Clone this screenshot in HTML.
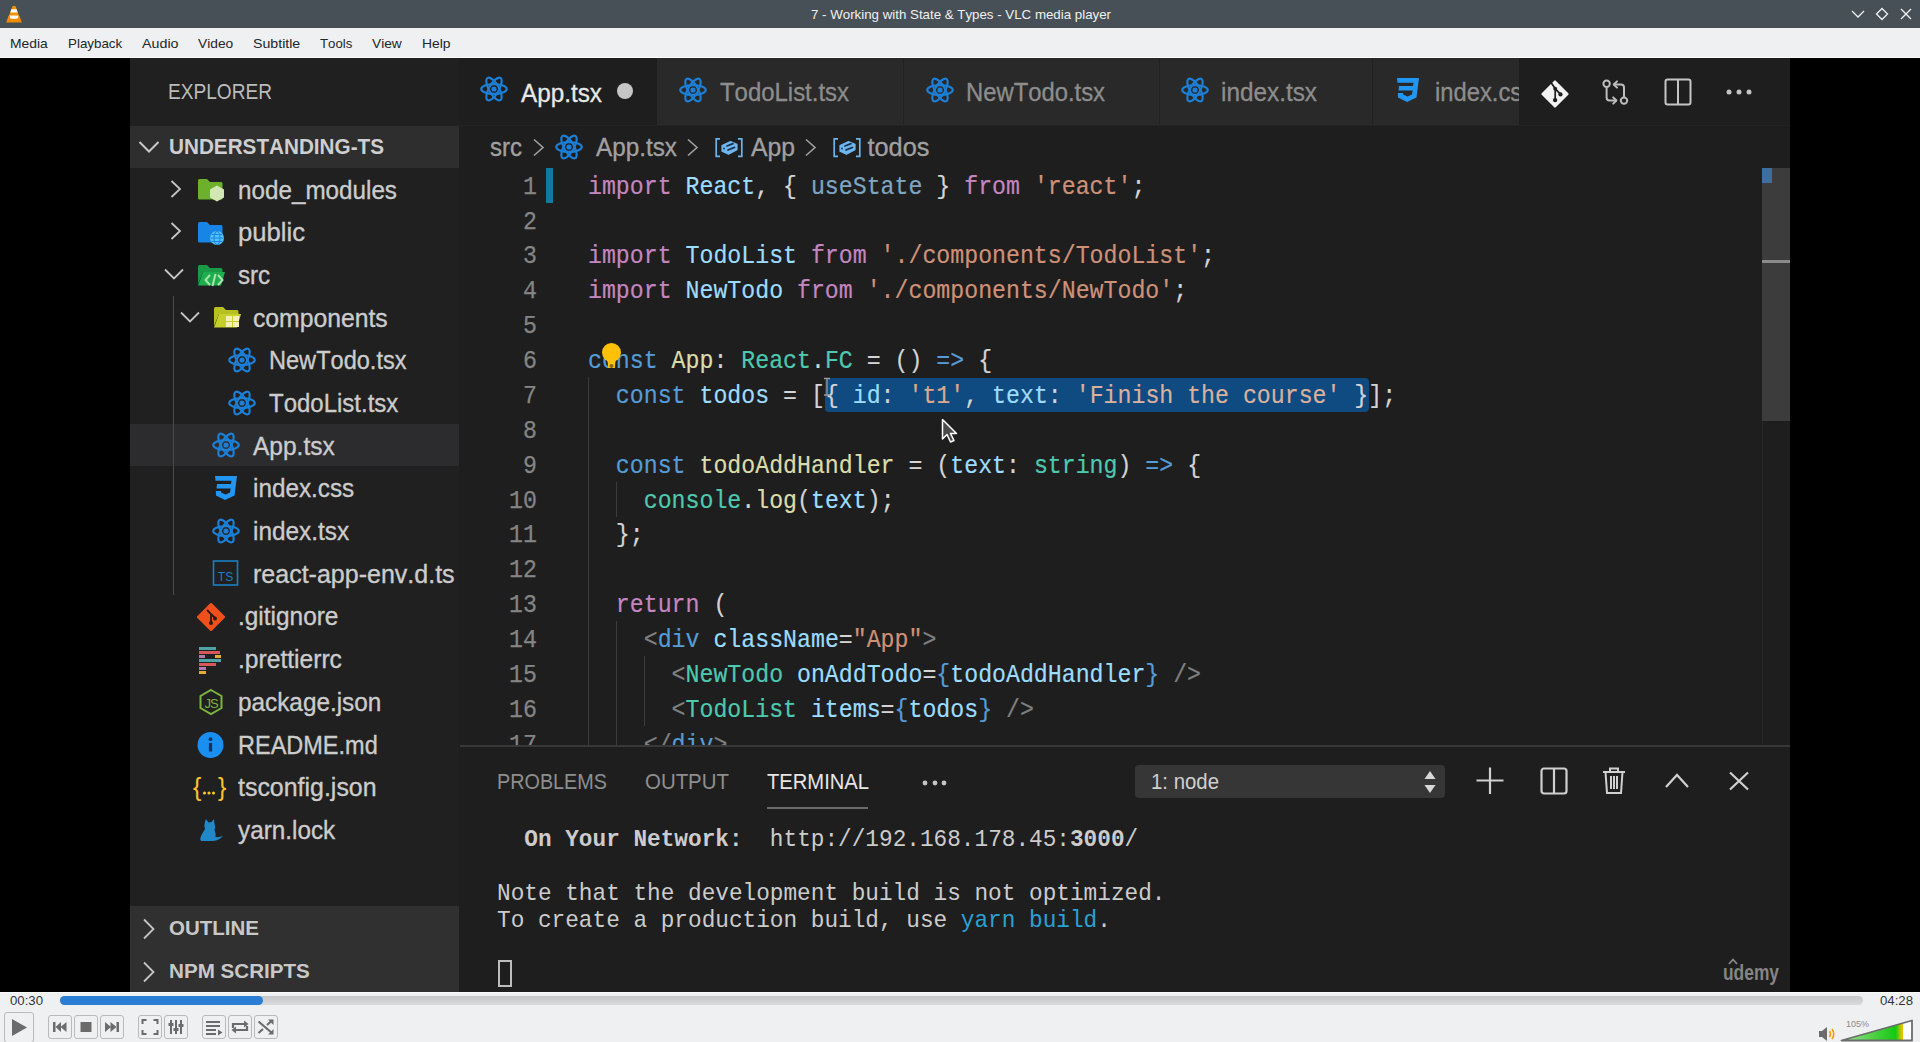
<!DOCTYPE html>
<html><head><meta charset="utf-8"><title>VLC</title>
<style>
*{box-sizing:border-box;margin:0;padding:0}
html,body{width:1920px;height:1042px;overflow:hidden;background:#000;position:relative}
.t{position:absolute;white-space:pre;transform-origin:0 0;font-kerning:none;font-variant-ligatures:none}
.r{position:absolute;display:block}
</style></head><body>
<div class="r" style="left:0px;top:0px;width:1920px;height:28px;background:#475057;"></div>
<svg class="r" style="left:0px;top:0px;" width="28" height="28" viewBox="0 0 28 28"><path d="M12.3 6.6 Q14 4.8 15.7 6.6 L19.6 17.5 H8.4 Z" fill="#f39200"/><path d="M8.6 15.6 H19.4 L21.8 22.6 H6.2 Z" fill="#f08a00"/><path d="M11.3 9.3 H16.7 L17.6 12.4 H10.4 Z" fill="#fbfbfb"/><path d="M9.7 15.6 H18.3 L18.1 18.2 Q14 19.8 9.9 18.2 Z" fill="#fbfbfb"/></svg>
<div class="t" style="left:810.50px;top:7.87px;font-size:13.5px;line-height:13.5px;color:#eff0f1;font-family:'Liberation Sans',sans-serif;font-weight:400;transform:scaleX(0.9849);">7 - Working with State &amp; Types - VLC media player</div>
<svg class="r" style="left:1850px;top:7px;" width="16" height="14" viewBox="0 0 16 14"><path d="M2 4 L8 10 L14 4" stroke="#eff0f1" stroke-width="1.3" fill="none"/></svg>
<svg class="r" style="left:1874px;top:6px;" width="16" height="16" viewBox="0 0 16 16"><path d="M8 2.5 L13.5 8 L8 13.5 L2.5 8 Z" stroke="#eff0f1" stroke-width="1.3" fill="none"/></svg>
<svg class="r" style="left:1898px;top:6px;" width="16" height="16" viewBox="0 0 16 16"><path d="M3 3 L13 13 M13 3 L3 13" stroke="#eff0f1" stroke-width="1.4" fill="none"/></svg>
<div class="r" style="left:0px;top:28px;width:1920px;height:29px;background:#eff0f1;"></div>
<div class="r" style="left:0px;top:57px;width:1920px;height:1px;background:#fcfcfc;"></div>
<div class="t" style="left:10.00px;top:36.94px;font-size:13.3px;line-height:13.3px;color:#232629;font-family:'Liberation Sans',sans-serif;font-weight:400;transform:scaleX(1.0435);">Media</div>
<div class="t" style="left:67.75px;top:36.94px;font-size:13.3px;line-height:13.3px;color:#232629;font-family:'Liberation Sans',sans-serif;font-weight:400;transform:scaleX(1.0053);">Playback</div>
<div class="t" style="left:141.50px;top:36.94px;font-size:13.3px;line-height:13.3px;color:#232629;font-family:'Liberation Sans',sans-serif;font-weight:400;transform:scaleX(1.0730);">Audio</div>
<div class="t" style="left:197.75px;top:36.94px;font-size:13.3px;line-height:13.3px;color:#232629;font-family:'Liberation Sans',sans-serif;font-weight:400;transform:scaleX(1.0363);">Video</div>
<div class="t" style="left:252.50px;top:36.94px;font-size:13.3px;line-height:13.3px;color:#232629;font-family:'Liberation Sans',sans-serif;font-weight:400;transform:scaleX(1.0651);">Subtitle</div>
<div class="t" style="left:319.50px;top:36.94px;font-size:13.3px;line-height:13.3px;color:#232629;font-family:'Liberation Sans',sans-serif;font-weight:400;transform:scaleX(0.9916);">Tools</div>
<div class="t" style="left:372.00px;top:36.94px;font-size:13.3px;line-height:13.3px;color:#232629;font-family:'Liberation Sans',sans-serif;font-weight:400;transform:scaleX(1.0320);">View</div>
<div class="t" style="left:422.00px;top:36.94px;font-size:13.3px;line-height:13.3px;color:#232629;font-family:'Liberation Sans',sans-serif;font-weight:400;transform:scaleX(1.0419);">Help</div>
<div class="r" style="left:0px;top:58px;width:1920px;height:934px;background:#000;"></div>
<div class="r" style="left:130px;top:58px;width:329px;height:934px;background:#202020;"></div>
<div class="t" style="left:168.00px;top:81.67px;font-size:21.3px;line-height:21.3px;color:#bbbbbb;font-family:'Liberation Sans',sans-serif;font-weight:400;transform:scaleX(0.8965);">EXPLORER</div>
<div class="r" style="left:130px;top:126px;width:329px;height:42px;background:#2e2e2e;"></div>
<svg class="r" style="left:137px;top:139px;" width="24" height="16" viewBox="0 0 24 16"><path d="M2.5 3 L12 12.5 L21.5 3" stroke="#c8c8c8" stroke-width="2" fill="none"/></svg>
<div class="t" style="left:168.50px;top:136.80px;font-size:21.5px;line-height:21.5px;color:#cfcfcf;font-family:'Liberation Sans',sans-serif;font-weight:700;transform:scaleX(0.9626);">UNDERSTANDING-TS</div>
<div class="r" style="left:130px;top:424px;width:329px;height:42px;background:#2c2c2e;"></div>
<div class="r" style="left:173px;top:296px;width:1px;height:299px;background:#4a4a4a;"></div>
<svg class="r" style="left:169px;top:179px;" width="14" height="20" viewBox="0 0 14 20"><path d="M2.5 2 L11 10 L2.5 18" stroke="#c5c5c5" stroke-width="1.8" fill="none"/></svg>
<svg class="r" style="left:197px;top:176px;" width="30" height="28" viewBox="0 0 30 28"><path d="M1 4.5 Q1 3 2.5 3 H10 L13 6 H24 Q25.5 6 25.5 7.5 V22 Q25.5 23.5 24 23.5 H2.5 Q1 23.5 1 22 Z" fill="#6cb02c"/><path d="M20 9.5 L27 13.5 V21.5 L20 25.5 L13 21.5 V13.5 Z" fill="#d3e7b4"/></svg>
<div class="t" style="left:237.50px;top:176.79px;font-size:26px;line-height:26px;color:#cccccc;font-family:'Liberation Sans',sans-serif;font-weight:400;transform:scaleX(0.9321);-webkit-text-stroke:0.35px #cccccc">node_modules</div>
<svg class="r" style="left:169px;top:221px;" width="14" height="20" viewBox="0 0 14 20"><path d="M2.5 2 L11 10 L2.5 18" stroke="#c5c5c5" stroke-width="1.8" fill="none"/></svg>
<svg class="r" style="left:197px;top:219px;" width="30" height="28" viewBox="0 0 30 28"><path d="M1 4.5 Q1 3 2.5 3 H10 L13 6 H24 Q25.5 6 25.5 7.5 V22 Q25.5 23.5 24 23.5 H2.5 Q1 23.5 1 22 Z" fill="#1884e6"/><circle cx="20" cy="19" r="7" fill="#56c2f4"/><g stroke="#1884e6" stroke-width="1.1" fill="none"><ellipse cx="20" cy="19" rx="3" ry="6.5"/><path d="M13.5 19 H26.5 M14.5 15.5 H25.5 M14.5 22.5 H25.5"/></g></svg>
<div class="t" style="left:237.50px;top:219.46px;font-size:26px;line-height:26px;color:#cccccc;font-family:'Liberation Sans',sans-serif;font-weight:400;transform:scaleX(0.9863);-webkit-text-stroke:0.35px #cccccc">public</div>
<svg class="r" style="left:163px;top:267px;" width="22" height="14" viewBox="0 0 22 14"><path d="M2 2.5 L11 11.5 L20 2.5" stroke="#c5c5c5" stroke-width="1.8" fill="none"/></svg>
<svg class="r" style="left:197px;top:262px;" width="30" height="28" viewBox="0 0 30 28"><path d="M1 4.5 Q1 3 2.5 3 H10 L13 6 H24 Q25.5 6 25.5 7.5 V10 H6 L1 22 Z" fill="#1a9a46"/><path d="M6 10 H28 L24 23.5 H1 Z" fill="#1fae4f"/><g stroke="#a8e6a8" stroke-width="2" fill="none"><path d="M13 13 L8.5 18 L13 23 M21 13 L25.5 18 L21 23 M18.5 12 L15.5 24"/></g></svg>
<div class="t" style="left:237.50px;top:262.13px;font-size:26px;line-height:26px;color:#cccccc;font-family:'Liberation Sans',sans-serif;font-weight:400;transform:scaleX(0.9291);-webkit-text-stroke:0.35px #cccccc">src</div>
<svg class="r" style="left:178.5px;top:310px;" width="22" height="14" viewBox="0 0 22 14"><path d="M2 2.5 L11 11.5 L20 2.5" stroke="#c5c5c5" stroke-width="1.8" fill="none"/></svg>
<svg class="r" style="left:212.5px;top:304px;" width="30" height="28" viewBox="0 0 30 28"><path d="M1 4.5 Q1 3 2.5 3 H10 L13 6 H24 Q25.5 6 25.5 7.5 V10 H6 L1 22 Z" fill="#b8c020"/><path d="M6 10 H28 L24 23.5 H1 Z" fill="#c6d02a"/><g fill="#f4f0b8"><rect x="13" y="12" width="6" height="5"/><rect x="20" y="12" width="6" height="5"/><rect x="13" y="18" width="6" height="5"/><rect x="20" y="18" width="6" height="5"/></g></svg>
<div class="t" style="left:253.00px;top:304.80px;font-size:26px;line-height:26px;color:#cccccc;font-family:'Liberation Sans',sans-serif;font-weight:400;transform:scaleX(0.9510);-webkit-text-stroke:0.35px #cccccc">components</div>
<svg class="r" style="left:227.5px;top:346px;" width="28" height="28" viewBox="0 0 28 28"><g fill="none" stroke="#1d80d8" stroke-width="2.1" transform="translate(14 14)"><ellipse rx="12.8" ry="4.9"/><ellipse rx="12.8" ry="4.9" transform="rotate(60)"/><ellipse rx="12.8" ry="4.9" transform="rotate(120)"/></g><circle cx="14" cy="14" r="2.6" fill="#1d80d8"/></svg>
<div class="t" style="left:268.50px;top:347.47px;font-size:26px;line-height:26px;color:#cccccc;font-family:'Liberation Sans',sans-serif;font-weight:400;transform:scaleX(0.9063);-webkit-text-stroke:0.35px #cccccc">NewTodo.tsx</div>
<svg class="r" style="left:227.5px;top:389px;" width="28" height="28" viewBox="0 0 28 28"><g fill="none" stroke="#1d80d8" stroke-width="2.1" transform="translate(14 14)"><ellipse rx="12.8" ry="4.9"/><ellipse rx="12.8" ry="4.9" transform="rotate(60)"/><ellipse rx="12.8" ry="4.9" transform="rotate(120)"/></g><circle cx="14" cy="14" r="2.6" fill="#1d80d8"/></svg>
<div class="t" style="left:268.50px;top:390.14px;font-size:26px;line-height:26px;color:#cccccc;font-family:'Liberation Sans',sans-serif;font-weight:400;transform:scaleX(0.9225);-webkit-text-stroke:0.35px #cccccc">TodoList.tsx</div>
<svg class="r" style="left:212px;top:431px;" width="28" height="28" viewBox="0 0 28 28"><g fill="none" stroke="#1d80d8" stroke-width="2.1" transform="translate(14 14)"><ellipse rx="12.8" ry="4.9"/><ellipse rx="12.8" ry="4.9" transform="rotate(60)"/><ellipse rx="12.8" ry="4.9" transform="rotate(120)"/></g><circle cx="14" cy="14" r="2.6" fill="#1d80d8"/></svg>
<div class="t" style="left:253.00px;top:432.81px;font-size:26px;line-height:26px;color:#cccccc;font-family:'Liberation Sans',sans-serif;font-weight:400;transform:scaleX(0.9422);-webkit-text-stroke:0.35px #cccccc">App.tsx</div>
<svg class="r" style="left:212px;top:474px;" width="28" height="28" viewBox="0 0 28 28"><path d="M3 2 H25 L22.5 21.5 L13 26 L4 21.5 L3.8 17 H9 L9.2 18.5 L13.5 20.5 L18 18.5 L18.6 14.5 H4.5 L5 10 H19 L19.5 6.8 H3.5 Z" fill="#2196f3"/></svg>
<div class="t" style="left:253.00px;top:475.48px;font-size:26px;line-height:26px;color:#cccccc;font-family:'Liberation Sans',sans-serif;font-weight:400;transform:scaleX(0.9338);-webkit-text-stroke:0.35px #cccccc">index.css</div>
<svg class="r" style="left:212px;top:517px;" width="28" height="28" viewBox="0 0 28 28"><g fill="none" stroke="#1d80d8" stroke-width="2.1" transform="translate(14 14)"><ellipse rx="12.8" ry="4.9"/><ellipse rx="12.8" ry="4.9" transform="rotate(60)"/><ellipse rx="12.8" ry="4.9" transform="rotate(120)"/></g><circle cx="14" cy="14" r="2.6" fill="#1d80d8"/></svg>
<div class="t" style="left:253.00px;top:518.15px;font-size:26px;line-height:26px;color:#cccccc;font-family:'Liberation Sans',sans-serif;font-weight:400;transform:scaleX(0.9366);-webkit-text-stroke:0.35px #cccccc">index.tsx</div>
<svg class="r" style="left:212px;top:559px;" width="28" height="28" viewBox="0 0 28 28"><rect x="1.5" y="2" width="24" height="24" fill="none" stroke="#1c7fc4" stroke-width="1.6"/><text x="13.5" y="22" text-anchor="middle" font-family="Liberation Sans" font-size="12" fill="#1c7fc4">TS</text></svg>
<div class="t" style="left:252.60px;top:560.82px;font-size:26px;line-height:26px;color:#cccccc;font-family:'Liberation Sans',sans-serif;font-weight:400;transform:scaleX(0.9621);-webkit-text-stroke:0.35px #cccccc">react-app-env.d.ts</div>
<svg class="r" style="left:197px;top:603px;" width="30" height="28" viewBox="0 0 30 28"><path d="M14 1.5 L26.5 14 L14 26.5 L1.5 14 Z" fill="#f0501c" stroke="#f0501c" stroke-width="3" stroke-linejoin="round"/><g stroke="#2a1a14" stroke-width="1.8" fill="none"><path d="M10 7 L14 11 V20 M14 11 L18 15"/></g><circle cx="14" cy="20" r="2" fill="#2a1a14"/><circle cx="18" cy="15.5" r="2" fill="#2a1a14"/></svg>
<div class="t" style="left:238.00px;top:603.49px;font-size:26px;line-height:26px;color:#cccccc;font-family:'Liberation Sans',sans-serif;font-weight:400;transform:scaleX(0.9387);-webkit-text-stroke:0.35px #cccccc">.gitignore</div>
<svg class="r" style="left:197px;top:646px;" width="28" height="30" viewBox="0 0 28 30"><rect x="2" y="1" width="17" height="3" fill="#56b3b4" opacity="0.9"/><rect x="2" y="5" width="21" height="3" fill="#ea5e5e" opacity="0.9"/><rect x="2" y="9" width="6" height="3" fill="#bf85bf" opacity="0.9"/><rect x="18" y="9" width="6" height="3" fill="#f7ba3e" opacity="0.9"/><rect x="2" y="13" width="22" height="3" fill="#56b3b4" opacity="0.9"/><rect x="2" y="17" width="17" height="3" fill="#ea5e5e" opacity="0.9"/><rect x="2" y="21" width="7" height="3" fill="#bf85bf" opacity="0.9"/><rect x="2" y="25" width="7" height="3" fill="#f7ba3e" opacity="0.9"/></svg>
<div class="t" style="left:238.00px;top:646.16px;font-size:26px;line-height:26px;color:#cccccc;font-family:'Liberation Sans',sans-serif;font-weight:400;transform:scaleX(0.9463);-webkit-text-stroke:0.35px #cccccc">.prettierrc</div>
<svg class="r" style="left:197px;top:688px;" width="28" height="28" viewBox="0 0 28 28"><path d="M14 2 L24.5 8 V20 L14 26 L3.5 20 V8 Z" fill="none" stroke="#7cb342" stroke-width="2"/><text x="14" y="19.5" text-anchor="middle" font-family="Liberation Sans" font-size="13" fill="#7cb342" letter-spacing="-1">JS</text></svg>
<div class="t" style="left:238.00px;top:688.83px;font-size:26px;line-height:26px;color:#cccccc;font-family:'Liberation Sans',sans-serif;font-weight:400;transform:scaleX(0.9353);-webkit-text-stroke:0.35px #cccccc">package.json</div>
<svg class="r" style="left:197px;top:731px;" width="28" height="28" viewBox="0 0 28 28"><circle cx="13.5" cy="14" r="13" fill="#1a8ff0"/><rect x="11.9" y="12" width="3.2" height="8.5" fill="#15335a"/><circle cx="13.5" cy="8.2" r="1.9" fill="#15335a"/></svg>
<div class="t" style="left:238.00px;top:731.50px;font-size:26px;line-height:26px;color:#cccccc;font-family:'Liberation Sans',sans-serif;font-weight:400;transform:scaleX(0.9038);-webkit-text-stroke:0.35px #cccccc">README.md</div>
<svg class="r" style="left:193px;top:774px;" width="34" height="28" viewBox="0 0 34 28"><text x="0" y="22" font-family="Liberation Sans" font-size="25" fill="#f9c22e">{</text><text x="25" y="22" font-family="Liberation Sans" font-size="25" fill="#f9c22e">}</text><g fill="#f9c22e"><circle cx="11.5" cy="19" r="1.6"/><circle cx="16" cy="19" r="1.6"/><circle cx="20.5" cy="19" r="1.6"/></g></svg>
<div class="t" style="left:238.00px;top:774.17px;font-size:26px;line-height:26px;color:#cccccc;font-family:'Liberation Sans',sans-serif;font-weight:400;transform:scaleX(0.9590);-webkit-text-stroke:0.35px #cccccc">tsconfig.json</div>
<svg class="r" style="left:197px;top:816px;" width="28" height="28" viewBox="0 0 28 28"><path d="M9 3 L11.5 6.5 L14.5 6 L17 3 L17.5 8 Q19 11 17.5 14 Q19 18 18.5 21 Q22 21.5 26 20 Q22 24.5 16 25 H4 Q2.5 23 4 20 Q6 16 8 13 Q6.5 9 9 3 Z" fill="#2188c8"/></svg>
<div class="t" style="left:238.00px;top:816.84px;font-size:26px;line-height:26px;color:#cccccc;font-family:'Liberation Sans',sans-serif;font-weight:400;transform:scaleX(0.9343);-webkit-text-stroke:0.35px #cccccc">yarn.lock</div>
<div class="r" style="left:130px;top:906px;width:329px;height:86px;background:#303030;"></div>
<svg class="r" style="left:141px;top:917px;" width="16" height="24" viewBox="0 0 16 24"><path d="M3 2.5 L12.5 12 L3 21.5" stroke="#c5c5c5" stroke-width="1.8" fill="none"/></svg>
<div class="t" style="left:168.50px;top:919.24px;font-size:19.8px;line-height:19.8px;color:#c8c8c8;font-family:'Liberation Sans',sans-serif;font-weight:700;transform:scaleX(1.0357);">OUTLINE</div>
<svg class="r" style="left:141px;top:960px;" width="16" height="24" viewBox="0 0 16 24"><path d="M3 2.5 L12.5 12 L3 21.5" stroke="#c5c5c5" stroke-width="1.8" fill="none"/></svg>
<div class="t" style="left:168.50px;top:962.24px;font-size:19.8px;line-height:19.8px;color:#c8c8c8;font-family:'Liberation Sans',sans-serif;font-weight:700;transform:scaleX(1.0420);">NPM SCRIPTS</div>
<div class="r" style="left:459px;top:58px;width:1331px;height:934px;background:#1e1e1e;"></div>
<div class="r" style="left:460px;top:58px;width:1330px;height:68px;background:#1e1e1e;"></div>
<div class="r" style="left:657px;top:58px;width:862px;height:68px;background:#292929;"></div>
<div class="r" style="left:903px;top:58px;width:1px;height:68px;background:#222222;"></div>
<div class="r" style="left:1159px;top:58px;width:1px;height:68px;background:#222222;"></div>
<div class="r" style="left:1372px;top:58px;width:1px;height:68px;background:#222222;"></div>
<div class="r" style="left:460px;top:125px;width:1330px;height:1px;background:#232323;"></div>
<svg class="r" style="left:480px;top:75px;" width="28" height="28" viewBox="0 0 28 28"><g fill="none" stroke="#1d80d8" stroke-width="2.1" transform="translate(14 14)"><ellipse rx="12.8" ry="4.9"/><ellipse rx="12.8" ry="4.9" transform="rotate(60)"/><ellipse rx="12.8" ry="4.9" transform="rotate(120)"/></g><circle cx="14" cy="14" r="2.6" fill="#1d80d8"/></svg>
<div class="t" style="left:521.00px;top:80.53px;font-size:25px;line-height:25px;color:#e8e8e8;font-family:'Liberation Sans',sans-serif;font-weight:400;transform:scaleX(0.9715);-webkit-text-stroke:0.3px #e8e8e8">App.tsx</div>
<svg class="r" style="left:616px;top:82px;" width="18" height="18" viewBox="0 0 18 18"><circle cx="9" cy="9" r="8" fill="#c6c6c6"/></svg>
<svg class="r" style="left:679px;top:76px;" width="28" height="28" viewBox="0 0 28 28"><g fill="none" stroke="#1d80d8" stroke-width="2.1" transform="translate(14 14)"><ellipse rx="12.8" ry="4.9"/><ellipse rx="12.8" ry="4.9" transform="rotate(60)"/><ellipse rx="12.8" ry="4.9" transform="rotate(120)"/></g><circle cx="14" cy="14" r="2.6" fill="#1d80d8"/></svg>
<div class="t" style="left:719.50px;top:80.43px;font-size:25px;line-height:25px;color:#8d8d8d;font-family:'Liberation Sans',sans-serif;font-weight:400;transform:scaleX(0.9571);-webkit-text-stroke:0.3px #8d8d8d">TodoList.tsx</div>
<svg class="r" style="left:925.5px;top:76px;" width="28" height="28" viewBox="0 0 28 28"><g fill="none" stroke="#1d80d8" stroke-width="2.1" transform="translate(14 14)"><ellipse rx="12.8" ry="4.9"/><ellipse rx="12.8" ry="4.9" transform="rotate(60)"/><ellipse rx="12.8" ry="4.9" transform="rotate(120)"/></g><circle cx="14" cy="14" r="2.6" fill="#1d80d8"/></svg>
<div class="t" style="left:966.00px;top:80.43px;font-size:25px;line-height:25px;color:#8d8d8d;font-family:'Liberation Sans',sans-serif;font-weight:400;transform:scaleX(0.9528);-webkit-text-stroke:0.3px #8d8d8d">NewTodo.tsx</div>
<svg class="r" style="left:1181px;top:76px;" width="28" height="28" viewBox="0 0 28 28"><g fill="none" stroke="#1d80d8" stroke-width="2.1" transform="translate(14 14)"><ellipse rx="12.8" ry="4.9"/><ellipse rx="12.8" ry="4.9" transform="rotate(60)"/><ellipse rx="12.8" ry="4.9" transform="rotate(120)"/></g><circle cx="14" cy="14" r="2.6" fill="#1d80d8"/></svg>
<div class="t" style="left:1221.00px;top:80.43px;font-size:25px;line-height:25px;color:#8d8d8d;font-family:'Liberation Sans',sans-serif;font-weight:400;transform:scaleX(0.9731);-webkit-text-stroke:0.3px #8d8d8d">index.tsx</div>
<svg class="r" style="left:1394px;top:76px;" width="28" height="28" viewBox="0 0 28 28"><path d="M3 2 H25 L22.5 21.5 L13 26 L4 21.5 L3.8 17 H9 L9.2 18.5 L13.5 20.5 L18 18.5 L18.6 14.5 H4.5 L5 10 H19 L19.5 6.8 H3.5 Z" fill="#2196f3"/></svg>
<div class="r" style="left:1434px;top:58px;width:85px;height:67px;overflow:hidden">
<div class="t" style="left:0.50px;top:22.43px;font-size:25px;line-height:25px;color:#8d8d8d;font-family:'Liberation Sans',sans-serif;font-weight:400;transform:scaleX(0.9500);-webkit-text-stroke:0.3px #8d8d8d">index.css</div>
</div>
<svg class="r" style="left:1541px;top:80px;" width="28" height="28" viewBox="0 0 28 28"><path d="M14 1.5 L26.5 14 L14 26.5 L1.5 14 Z" fill="#f2f2f2" stroke="#f2f2f2" stroke-width="2.2" stroke-linejoin="round"/><g stroke="#1e1e1e" stroke-width="1.7" fill="none" stroke-linecap="round"><path d="M10 2.5 L14.2 8.6 L19.5 14.4 M14.2 8.6 V20"/></g><circle cx="14.2" cy="8.7" r="1.9" fill="#1e1e1e"/><circle cx="19.5" cy="14.4" r="2.1" fill="#1e1e1e"/><circle cx="14.1" cy="20.1" r="2.2" fill="#1e1e1e"/></svg>
<svg class="r" style="left:1600px;top:78px;" width="30" height="30" viewBox="0 0 30 30"><g stroke="#bdbdbd" stroke-width="2" fill="none" stroke-linecap="round" stroke-linejoin="round"><circle cx="6.6" cy="5.7" r="3.2"/><path d="M6.6 9 V19.5 Q6.6 22.5 9.6 22.5 H16"/><path d="M13.2 19.4 L16.4 22.5 L13.2 25.6"/><circle cx="24" cy="22.6" r="3.2"/><path d="M24 19.3 V9.5 Q24 6.5 21 6.5 H14"/><path d="M17 3.4 L13.8 6.5 L17 9.6"/></g></svg>
<svg class="r" style="left:1664px;top:78px;" width="28" height="28" viewBox="0 0 28 28"><rect x="1.5" y="1.5" width="25" height="25" rx="2" fill="none" stroke="#c5c5c5" stroke-width="2"/><path d="M14 1.5 V26.5" stroke="#c5c5c5" stroke-width="2"/></svg>
<svg class="r" style="left:1726px;top:89px;" width="6" height="6" viewBox="0 0 6 6"><circle cx="3" cy="3" r="2.5" fill="#c5c5c5"/></svg>
<svg class="r" style="left:1736px;top:89px;" width="6" height="6" viewBox="0 0 6 6"><circle cx="3" cy="3" r="2.5" fill="#c5c5c5"/></svg>
<svg class="r" style="left:1746px;top:89px;" width="6" height="6" viewBox="0 0 6 6"><circle cx="3" cy="3" r="2.5" fill="#c5c5c5"/></svg>
<div class="t" style="left:490.00px;top:134.98px;font-size:25.3px;line-height:25.3px;color:#a0a0a0;font-family:'Liberation Sans',sans-serif;font-weight:400;transform:scaleX(0.9488);-webkit-text-stroke:0.3px #a9a9a9">src</div>
<svg class="r" style="left:532px;top:138px;" width="14" height="20" viewBox="0 0 14 20"><path d="M2 1.5 L11 9.5 L2 17.5" stroke="#a0a0a0" stroke-width="1.6" fill="none"/></svg>
<svg class="r" style="left:555px;top:133px;" width="28" height="28" viewBox="0 0 28 28"><g fill="none" stroke="#1d80d8" stroke-width="2.1" transform="translate(14 14)"><ellipse rx="12.8" ry="4.9"/><ellipse rx="12.8" ry="4.9" transform="rotate(60)"/><ellipse rx="12.8" ry="4.9" transform="rotate(120)"/></g><circle cx="14" cy="14" r="2.6" fill="#1d80d8"/></svg>
<div class="t" style="left:596.00px;top:134.98px;font-size:25.3px;line-height:25.3px;color:#a0a0a0;font-family:'Liberation Sans',sans-serif;font-weight:400;transform:scaleX(0.9600);-webkit-text-stroke:0.3px #a9a9a9">App.tsx</div>
<svg class="r" style="left:686px;top:138px;" width="14" height="20" viewBox="0 0 14 20"><path d="M2 1.5 L11 9.5 L2 17.5" stroke="#a0a0a0" stroke-width="1.6" fill="none"/></svg>
<svg class="r" style="left:714px;top:137px;" width="30" height="22" viewBox="0 0 30 22"><g fill="none" stroke="#6cb4ec" stroke-width="1.7"><path d="M6 1.8 H2.2 V19.4 H6"/><path d="M24 1.8 H27.8 V19.4 H24"/></g><path d="M8 8.5 L16.5 4.5 L23 7.2 V12.8 L14.5 17.2 L8 14.2 Z" fill="#6fb6ee" stroke="#6fb6ee" stroke-width="1.2" stroke-linejoin="round"/><g stroke="#17324f" stroke-width="1.8" stroke-linecap="round"><path d="M13 9 L19 6.6"/><path d="M14 13 L20.5 10.4"/></g><circle cx="10" cy="11.5" r="0.9" fill="#17324f"/></svg>
<div class="t" style="left:750.50px;top:135.18px;font-size:25.3px;line-height:25.3px;color:#a0a0a0;font-family:'Liberation Sans',sans-serif;font-weight:400;transform:scaleX(0.9774);-webkit-text-stroke:0.3px #a9a9a9">App</div>
<svg class="r" style="left:804px;top:138px;" width="14" height="20" viewBox="0 0 14 20"><path d="M2 1.5 L11 9.5 L2 17.5" stroke="#a0a0a0" stroke-width="1.6" fill="none"/></svg>
<svg class="r" style="left:832px;top:137px;" width="30" height="22" viewBox="0 0 30 22"><g fill="none" stroke="#6cb4ec" stroke-width="1.7"><path d="M6 1.8 H2.2 V19.4 H6"/><path d="M24 1.8 H27.8 V19.4 H24"/></g><path d="M8 8.5 L16.5 4.5 L23 7.2 V12.8 L14.5 17.2 L8 14.2 Z" fill="#6fb6ee" stroke="#6fb6ee" stroke-width="1.2" stroke-linejoin="round"/><g stroke="#17324f" stroke-width="1.8" stroke-linecap="round"><path d="M13 9 L19 6.6"/><path d="M14 13 L20.5 10.4"/></g><circle cx="10" cy="11.5" r="0.9" fill="#17324f"/></svg>
<div class="t" style="left:867.50px;top:135.18px;font-size:25.3px;line-height:25.3px;color:#a0a0a0;font-family:'Liberation Sans',sans-serif;font-weight:400;-webkit-text-stroke:0.3px #a9a9a9">todos</div>
<div class="r" style="left:588px;top:377px;width:1px;height:368px;background:#3b3b3b;"></div>
<div class="r" style="left:616px;top:482px;width:1px;height:35px;background:#3b3b3b;"></div>
<div class="r" style="left:616px;top:621px;width:1px;height:124px;background:#3b3b3b;"></div>
<div class="r" style="left:644px;top:656px;width:1px;height:70px;background:#3b3b3b;"></div>
<div class="r" style="left:546px;top:168px;width:7px;height:35px;background:#0e7aa0;"></div>
<div class="r" style="left:825px;top:378px;width:544px;height:34px;background:#0f4a80;border-radius:4px"></div>
<div class="r" style="left:460px;top:126px;width:1302px;height:619px;overflow:hidden">
<div class="t" style="left:62.57px;top:47.70px;font-size:26.5px;line-height:26.5px;color:#858585;font-family:'Liberation Mono',monospace;font-weight:400;transform:scaleX(0.8760);-webkit-text-stroke:0.25px #858585">1</div>
<div class="t" style="left:62.57px;top:82.57px;font-size:26.5px;line-height:26.5px;color:#858585;font-family:'Liberation Mono',monospace;font-weight:400;transform:scaleX(0.8760);-webkit-text-stroke:0.25px #858585">2</div>
<div class="t" style="left:62.57px;top:117.44px;font-size:26.5px;line-height:26.5px;color:#858585;font-family:'Liberation Mono',monospace;font-weight:400;transform:scaleX(0.8760);-webkit-text-stroke:0.25px #858585">3</div>
<div class="t" style="left:62.57px;top:152.31px;font-size:26.5px;line-height:26.5px;color:#858585;font-family:'Liberation Mono',monospace;font-weight:400;transform:scaleX(0.8760);-webkit-text-stroke:0.25px #858585">4</div>
<div class="t" style="left:62.57px;top:187.18px;font-size:26.5px;line-height:26.5px;color:#858585;font-family:'Liberation Mono',monospace;font-weight:400;transform:scaleX(0.8760);-webkit-text-stroke:0.25px #858585">5</div>
<div class="t" style="left:62.57px;top:222.05px;font-size:26.5px;line-height:26.5px;color:#858585;font-family:'Liberation Mono',monospace;font-weight:400;transform:scaleX(0.8760);-webkit-text-stroke:0.25px #858585">6</div>
<div class="t" style="left:62.57px;top:256.92px;font-size:26.5px;line-height:26.5px;color:#858585;font-family:'Liberation Mono',monospace;font-weight:400;transform:scaleX(0.8760);-webkit-text-stroke:0.25px #858585">7</div>
<div class="t" style="left:62.57px;top:291.79px;font-size:26.5px;line-height:26.5px;color:#858585;font-family:'Liberation Mono',monospace;font-weight:400;transform:scaleX(0.8760);-webkit-text-stroke:0.25px #858585">8</div>
<div class="t" style="left:62.57px;top:326.66px;font-size:26.5px;line-height:26.5px;color:#858585;font-family:'Liberation Mono',monospace;font-weight:400;transform:scaleX(0.8760);-webkit-text-stroke:0.25px #858585">9</div>
<div class="t" style="left:48.64px;top:361.53px;font-size:26.5px;line-height:26.5px;color:#858585;font-family:'Liberation Mono',monospace;font-weight:400;transform:scaleX(0.8760);-webkit-text-stroke:0.25px #858585">10</div>
<div class="t" style="left:48.64px;top:396.40px;font-size:26.5px;line-height:26.5px;color:#858585;font-family:'Liberation Mono',monospace;font-weight:400;transform:scaleX(0.8760);-webkit-text-stroke:0.25px #858585">11</div>
<div class="t" style="left:48.64px;top:431.27px;font-size:26.5px;line-height:26.5px;color:#858585;font-family:'Liberation Mono',monospace;font-weight:400;transform:scaleX(0.8760);-webkit-text-stroke:0.25px #858585">12</div>
<div class="t" style="left:48.64px;top:466.14px;font-size:26.5px;line-height:26.5px;color:#858585;font-family:'Liberation Mono',monospace;font-weight:400;transform:scaleX(0.8760);-webkit-text-stroke:0.25px #858585">13</div>
<div class="t" style="left:48.64px;top:501.01px;font-size:26.5px;line-height:26.5px;color:#858585;font-family:'Liberation Mono',monospace;font-weight:400;transform:scaleX(0.8760);-webkit-text-stroke:0.25px #858585">14</div>
<div class="t" style="left:48.64px;top:535.88px;font-size:26.5px;line-height:26.5px;color:#858585;font-family:'Liberation Mono',monospace;font-weight:400;transform:scaleX(0.8760);-webkit-text-stroke:0.25px #858585">15</div>
<div class="t" style="left:48.64px;top:570.75px;font-size:26.5px;line-height:26.5px;color:#858585;font-family:'Liberation Mono',monospace;font-weight:400;transform:scaleX(0.8760);-webkit-text-stroke:0.25px #858585">16</div>
<div class="t" style="left:48.64px;top:605.62px;font-size:26.5px;line-height:26.5px;color:#858585;font-family:'Liberation Mono',monospace;font-weight:400;transform:scaleX(0.8760);-webkit-text-stroke:0.25px #858585">17</div>
<div class="t" style="left:128px;top:47.70px;font-size:26.5px;line-height:26.5px;font-family:'Liberation Mono',monospace;transform:scaleX(0.8761);-webkit-text-stroke:0.2px currentColor"><span style="color:#c586c0">import</span><span style="color:#d4d4d4"> </span><span style="color:#9cdcfe">React</span><span style="color:#d4d4d4">, { </span><span style="color:#7ea6c2">useState</span><span style="color:#d4d4d4"> } </span><span style="color:#c586c0">from</span><span style="color:#d4d4d4"> </span><span style="color:#ce9178">&#x27;react&#x27;</span><span style="color:#d4d4d4">;</span></div>
<div class="t" style="left:128px;top:117.44px;font-size:26.5px;line-height:26.5px;font-family:'Liberation Mono',monospace;transform:scaleX(0.8761);-webkit-text-stroke:0.2px currentColor"><span style="color:#c586c0">import</span><span style="color:#d4d4d4"> </span><span style="color:#9cdcfe">TodoList</span><span style="color:#d4d4d4"> </span><span style="color:#c586c0">from</span><span style="color:#d4d4d4"> </span><span style="color:#ce9178">&#x27;./components/TodoList&#x27;</span><span style="color:#d4d4d4">;</span></div>
<div class="t" style="left:128px;top:152.31px;font-size:26.5px;line-height:26.5px;font-family:'Liberation Mono',monospace;transform:scaleX(0.8761);-webkit-text-stroke:0.2px currentColor"><span style="color:#c586c0">import</span><span style="color:#d4d4d4"> </span><span style="color:#9cdcfe">NewTodo</span><span style="color:#d4d4d4"> </span><span style="color:#c586c0">from</span><span style="color:#d4d4d4"> </span><span style="color:#ce9178">&#x27;./components/NewTodo&#x27;</span><span style="color:#d4d4d4">;</span></div>
<div class="t" style="left:128px;top:222.05px;font-size:26.5px;line-height:26.5px;font-family:'Liberation Mono',monospace;transform:scaleX(0.8761);-webkit-text-stroke:0.2px currentColor"><span style="color:#569cd6">const</span><span style="color:#d4d4d4"> </span><span style="color:#dcdcaa">App</span><span style="color:#d4d4d4">: </span><span style="color:#4ec9b0">React</span><span style="color:#d4d4d4">.</span><span style="color:#4ec9b0">FC</span><span style="color:#d4d4d4"> = () </span><span style="color:#569cd6">=&gt;</span><span style="color:#d4d4d4"> {</span></div>
<div class="t" style="left:128px;top:256.92px;font-size:26.5px;line-height:26.5px;font-family:'Liberation Mono',monospace;transform:scaleX(0.8761);-webkit-text-stroke:0.2px currentColor"><span style="color:#d4d4d4">  </span><span style="color:#569cd6">const</span><span style="color:#d4d4d4"> </span><span style="color:#9cdcfe">todos</span><span style="color:#d4d4d4"> = [</span><span style="color:#d4d4d4">{ </span><span style="color:#9cdcfe">id</span><span style="color:#d4d4d4">: </span><span style="color:#d9a890">&#x27;t1&#x27;</span><span style="color:#d4d4d4">, </span><span style="color:#9cdcfe">text</span><span style="color:#d4d4d4">: </span><span style="color:#d9b0a0">&#x27;Finish the course&#x27;</span><span style="color:#d4d4d4"> }</span><span style="color:#d4d4d4">];</span></div>
<div class="t" style="left:128px;top:326.66px;font-size:26.5px;line-height:26.5px;font-family:'Liberation Mono',monospace;transform:scaleX(0.8761);-webkit-text-stroke:0.2px currentColor"><span style="color:#d4d4d4">  </span><span style="color:#569cd6">const</span><span style="color:#d4d4d4"> </span><span style="color:#dcdcaa">todoAddHandler</span><span style="color:#d4d4d4"> = (</span><span style="color:#9cdcfe">text</span><span style="color:#d4d4d4">: </span><span style="color:#4ec9b0">string</span><span style="color:#d4d4d4">) </span><span style="color:#569cd6">=&gt;</span><span style="color:#d4d4d4"> {</span></div>
<div class="t" style="left:128px;top:361.53px;font-size:26.5px;line-height:26.5px;font-family:'Liberation Mono',monospace;transform:scaleX(0.8761);-webkit-text-stroke:0.2px currentColor"><span style="color:#d4d4d4">    </span><span style="color:#4ec9b0">console</span><span style="color:#d4d4d4">.</span><span style="color:#dcdcaa">log</span><span style="color:#d4d4d4">(</span><span style="color:#9cdcfe">text</span><span style="color:#d4d4d4">);</span></div>
<div class="t" style="left:128px;top:396.40px;font-size:26.5px;line-height:26.5px;font-family:'Liberation Mono',monospace;transform:scaleX(0.8761);-webkit-text-stroke:0.2px currentColor"><span style="color:#d4d4d4">  };</span></div>
<div class="t" style="left:128px;top:466.14px;font-size:26.5px;line-height:26.5px;font-family:'Liberation Mono',monospace;transform:scaleX(0.8761);-webkit-text-stroke:0.2px currentColor"><span style="color:#d4d4d4">  </span><span style="color:#c586c0">return</span><span style="color:#d4d4d4"> (</span></div>
<div class="t" style="left:128px;top:501.01px;font-size:26.5px;line-height:26.5px;font-family:'Liberation Mono',monospace;transform:scaleX(0.8761);-webkit-text-stroke:0.2px currentColor"><span style="color:#d4d4d4">    </span><span style="color:#808080">&lt;</span><span style="color:#569cd6">div</span><span style="color:#d4d4d4"> </span><span style="color:#9cdcfe">className</span><span style="color:#d4d4d4">=</span><span style="color:#ce9178">&quot;App&quot;</span><span style="color:#808080">&gt;</span></div>
<div class="t" style="left:128px;top:535.88px;font-size:26.5px;line-height:26.5px;font-family:'Liberation Mono',monospace;transform:scaleX(0.8761);-webkit-text-stroke:0.2px currentColor"><span style="color:#d4d4d4">      </span><span style="color:#808080">&lt;</span><span style="color:#4ec9b0">NewTodo</span><span style="color:#d4d4d4"> </span><span style="color:#9cdcfe">onAddTodo</span><span style="color:#d4d4d4">=</span><span style="color:#569cd6">{</span><span style="color:#9cdcfe">todoAddHandler</span><span style="color:#569cd6">}</span><span style="color:#808080"> /&gt;</span></div>
<div class="t" style="left:128px;top:570.75px;font-size:26.5px;line-height:26.5px;font-family:'Liberation Mono',monospace;transform:scaleX(0.8761);-webkit-text-stroke:0.2px currentColor"><span style="color:#d4d4d4">      </span><span style="color:#808080">&lt;</span><span style="color:#4ec9b0">TodoList</span><span style="color:#d4d4d4"> </span><span style="color:#9cdcfe">items</span><span style="color:#d4d4d4">=</span><span style="color:#569cd6">{</span><span style="color:#9cdcfe">todos</span><span style="color:#569cd6">}</span><span style="color:#808080"> /&gt;</span></div>
<div class="t" style="left:128px;top:605.62px;font-size:26.5px;line-height:26.5px;font-family:'Liberation Mono',monospace;transform:scaleX(0.8761);-webkit-text-stroke:0.2px currentColor"><span style="color:#d4d4d4">    </span><span style="color:#808080">&lt;/</span><span style="color:#569cd6">div</span><span style="color:#808080">&gt;</span></div>
</div>
<svg class="r" style="left:600px;top:342px;" width="24" height="30" viewBox="0 0 24 30"><circle cx="11.5" cy="10.5" r="9.5" fill="#ffc107"/><path d="M6.5 16 Q8 20 8 26 H15 Q15 20 16.5 16 Z" fill="#ffc107"/><circle cx="11.5" cy="24" r="2" fill="#333" opacity="0.6"/></svg>
<svg class="r" style="left:941px;top:418px;" width="18" height="26" viewBox="0 0 18 26"><path d="M1.5 1.5 V21 L6 16.5 L9.5 24 L13 22.5 L9.5 15.5 H15.5 Z" fill="#4a4a4a" stroke="#fff" stroke-width="1.5" stroke-linejoin="round"/></svg>
<svg class="r" style="left:822px;top:377px;" width="10" height="20" viewBox="0 0 10 20"><path d="M2 1.5 H8 M5 1.5 V18 M2 18 H8" stroke="#9a9a9a" stroke-width="1.3" fill="none"/></svg>
<div class="r" style="left:1762px;top:168px;width:28px;height:253px;background:#3c3c3c;"></div>
<div class="r" style="left:1762px;top:260px;width:28px;height:3px;background:#8a8a8a;"></div>
<div class="r" style="left:1762px;top:168px;width:10px;height:15px;background:#3e6e9e;"></div>
<div class="r" style="left:1762px;top:421px;width:1px;height:324px;background:#262626;"></div>
<div class="r" style="left:460px;top:745px;width:1330px;height:247px;background:#1e1e1e;"></div>
<div class="r" style="left:460px;top:745px;width:1330px;height:2px;background:#383838;"></div>
<div class="t" style="left:497.00px;top:770.54px;font-size:21.8px;line-height:21.8px;color:#8e8e8e;font-family:'Liberation Sans',sans-serif;font-weight:400;transform:scaleX(0.9080);">PROBLEMS</div>
<div class="t" style="left:645.00px;top:770.54px;font-size:21.8px;line-height:21.8px;color:#8e8e8e;font-family:'Liberation Sans',sans-serif;font-weight:400;transform:scaleX(0.9373);">OUTPUT</div>
<div class="t" style="left:767.00px;top:770.54px;font-size:21.8px;line-height:21.8px;color:#e6e6e6;font-family:'Liberation Sans',sans-serif;font-weight:400;transform:scaleX(0.9254);">TERMINAL</div>
<div class="r" style="left:767px;top:807px;width:101px;height:2px;background:#6a6a6a;"></div>
<svg class="r" style="left:922px;top:780px;" width="6" height="6" viewBox="0 0 6 6"><circle cx="3" cy="3" r="2.4" fill="#c5c5c5"/></svg>
<svg class="r" style="left:932px;top:780px;" width="6" height="6" viewBox="0 0 6 6"><circle cx="3" cy="3" r="2.4" fill="#c5c5c5"/></svg>
<svg class="r" style="left:941px;top:780px;" width="6" height="6" viewBox="0 0 6 6"><circle cx="3" cy="3" r="2.4" fill="#c5c5c5"/></svg>
<div class="r" style="left:1135px;top:765px;width:310px;height:33px;background:#363636;border-radius:4px"></div>
<div class="t" style="left:1150.50px;top:770.74px;font-size:21.8px;line-height:21.8px;color:#d0d0d0;font-family:'Liberation Sans',sans-serif;font-weight:400;transform:scaleX(0.9349);">1: node</div>
<svg class="r" style="left:1422px;top:769px;" width="16" height="26" viewBox="0 0 16 26"><path d="M8 2 L13.5 10 H2.5 Z M8 24 L13.5 16 H2.5 Z" fill="#d8d8d8"/></svg>
<svg class="r" style="left:1476px;top:767px;" width="28" height="28" viewBox="0 0 28 28"><path d="M14 0.5 V27 M0.5 13.5 H27.5" stroke="#d0d0d0" stroke-width="2.2" fill="none"/></svg>
<svg class="r" style="left:1540px;top:767px;" width="28" height="28" viewBox="0 0 28 28"><rect x="1.5" y="1.5" width="25" height="25" rx="2.5" fill="none" stroke="#d0d0d0" stroke-width="2.2"/><path d="M14 1.5 V26.5" stroke="#d0d0d0" stroke-width="2.2"/></svg>
<svg class="r" style="left:1601px;top:766px;" width="26" height="29" viewBox="0 0 26 29"><g fill="none" stroke="#d0d0d0" stroke-width="2"><path d="M2 6 H24"/><path d="M9 6 V2.5 H17 V6"/><path d="M4.5 6 L6 27 H20 L21.5 6"/><path d="M10 10 V23 M13 10 V23 M16 10 V23"/></g></svg>
<svg class="r" style="left:1664px;top:772px;" width="26" height="17" viewBox="0 0 26 17"><path d="M2 15 L13 3 L24 15" stroke="#d0d0d0" stroke-width="2.2" fill="none"/></svg>
<svg class="r" style="left:1728px;top:771px;" width="22" height="20" viewBox="0 0 22 20"><path d="M2 1.5 L20 18.5 M20 1.5 L2 18.5" stroke="#d0d0d0" stroke-width="2.2" fill="none"/></svg>
<div class="t" style="left:496.5px;top:828.01px;font-size:24px;line-height:24px;font-family:'Liberation Mono',monospace;transform:scaleX(0.9472)"><span style="color:#cccccc;font-weight:700">  On Your Network:</span><span style="color:#cccccc;font-weight:400">  http</span><span style="color:#cccccc;font-weight:400">:</span><span style="color:#cccccc;font-weight:400">//192.168.178.45:</span><span style="color:#cccccc;font-weight:700">3000</span><span style="color:#cccccc;font-weight:400">/</span></div>
<div class="t" style="left:496.5px;top:881.91px;font-size:24px;line-height:24px;font-family:'Liberation Mono',monospace;transform:scaleX(0.9472)"><span style="color:#cccccc;font-weight:400">Note that the development build is not optimized.</span></div>
<div class="t" style="left:496.5px;top:908.91px;font-size:24px;line-height:24px;font-family:'Liberation Mono',monospace;transform:scaleX(0.9472)"><span style="color:#cccccc;font-weight:400">To create a production build, use </span><span style="color:#2aa1d3;font-weight:400">yarn build</span><span style="color:#cccccc;font-weight:400">.</span></div>
<div class="r" style="left:498px;top:960px;width:14px;height:27px;background:transparent;border:2px solid #bdbdbd"></div>
<div class="t" style="left:1723.00px;top:962.37px;font-size:22px;line-height:22px;color:#858585;font-family:'Liberation Sans',sans-serif;font-weight:700;transform:scaleX(0.7897);">udemy</div>
<svg class="r" style="left:1728px;top:958px;" width="10" height="7" viewBox="0 0 10 7"><path d="M1 6 L5 1.5 L9 6" stroke="#8a8a8a" stroke-width="1.8" fill="none"/></svg>
<div class="r" style="left:0px;top:992px;width:1920px;height:50px;background:#eff0f1;"></div>
<div class="r" style="left:0px;top:992px;width:1920px;height:1px;background:#fafafa;"></div>
<div class="t" style="left:10.00px;top:994.83px;font-size:12.6px;line-height:12.6px;color:#31363b;font-family:'Liberation Sans',sans-serif;font-weight:400;transform:scaleX(1.0466);">00:30</div>
<div class="t" style="left:1879.50px;top:994.83px;font-size:12.6px;line-height:12.6px;color:#31363b;font-family:'Liberation Sans',sans-serif;font-weight:400;transform:scaleX(1.0466);">04:28</div>
<div class="r" style="left:60px;top:996px;width:1803px;height:9px;background:linear-gradient(#c4c6c8,#d8dadc);border-radius:4.5px"></div>
<div class="r" style="left:60px;top:996px;width:203px;height:9px;background:#2a7fd4;border-radius:4.5px"></div>
<div class="r" style="left:4px;top:1012px;width:30px;height:31px;border:1px solid #b8babc;border-radius:3px;background:#eff0f1"></div>
<svg class="r" style="left:4px;top:1012px;" width="30" height="31" viewBox="0 0 30 31"><path d="M8 7 L23 15.5 L8 24 Z" fill="#6b6b6b"/></svg>
<div class="r" style="left:48px;top:1015px;width:24px;height:24px;border:1px solid #b8babc;border-radius:3px;background:#eff0f1"></div>
<svg class="r" style="left:48px;top:1015px;" width="24" height="24" viewBox="0 0 24 24"><rect x="5" y="7" width="2.5" height="10" fill="#6b6b6b"/><path d="M7.5 12 L13 7 V17 Z M12.5 12 L18.5 7 V17 Z" fill="#6b6b6b"/></svg>
<div class="r" style="left:74px;top:1015px;width:24px;height:24px;border:1px solid #b8babc;border-radius:3px;background:#eff0f1"></div>
<svg class="r" style="left:74px;top:1015px;" width="24" height="24" viewBox="0 0 24 24"><rect x="6.5" y="7" width="11" height="10" fill="#6b6b6b"/></svg>
<div class="r" style="left:100px;top:1015px;width:24px;height:24px;border:1px solid #b8babc;border-radius:3px;background:#eff0f1"></div>
<svg class="r" style="left:100px;top:1015px;" width="24" height="24" viewBox="0 0 24 24"><path d="M5 7 L11 12 L5 17 Z M10.5 7 L16.5 12 L10.5 17 Z" fill="#6b6b6b"/><rect x="16.5" y="7" width="2.5" height="10" fill="#6b6b6b"/></svg>
<div class="r" style="left:138px;top:1015px;width:24px;height:24px;border:1px solid #b8babc;border-radius:3px;background:#eff0f1"></div>
<svg class="r" style="left:138px;top:1015px;" width="24" height="24" viewBox="0 0 24 24"><g stroke="#6b6b6b" stroke-width="2" fill="none"><path d="M4.5 9 V5 H8.5 M15.5 5 H19.5 V9 M19.5 15 V19 H15.5 M8.5 19 H4.5 V15"/></g></svg>
<div class="r" style="left:164px;top:1015px;width:24px;height:24px;border:1px solid #b8babc;border-radius:3px;background:#eff0f1"></div>
<svg class="r" style="left:164px;top:1015px;" width="24" height="24" viewBox="0 0 24 24"><g stroke="#6b6b6b" stroke-width="2" fill="none"><path d="M7 5 V19 M12 5 V19 M17 5 V19"/></g><g fill="#6b6b6b"><rect x="4.5" y="8" width="5" height="3"/><rect x="9.5" y="13" width="5" height="3"/><rect x="14.5" y="9" width="5" height="3"/></g></svg>
<div class="r" style="left:202px;top:1015px;width:24px;height:24px;border:1px solid #b8babc;border-radius:3px;background:#eff0f1"></div>
<svg class="r" style="left:202px;top:1015px;" width="24" height="24" viewBox="0 0 24 24"><g fill="#6b6b6b"><rect x="4" y="6" width="14" height="2"/><rect x="4" y="10" width="14" height="2"/><rect x="4" y="14" width="10" height="2"/><rect x="4" y="18" width="10" height="2"/><path d="M16 14.5 L20.5 17.5 L16 20.5 Z"/></g></svg>
<div class="r" style="left:228px;top:1015px;width:24px;height:24px;border:1px solid #b8babc;border-radius:3px;background:#eff0f1"></div>
<svg class="r" style="left:228px;top:1015px;" width="24" height="24" viewBox="0 0 24 24"><g stroke="#6b6b6b" stroke-width="2.2" fill="none"><path d="M5 13 V9 H17"/><path d="M19 11 V15 H7"/></g><path d="M16 5.5 L20.5 9 L16 12.5 Z M8 11.5 L3.5 15 L8 18.5 Z" fill="#6b6b6b"/></svg>
<div class="r" style="left:254px;top:1015px;width:24px;height:24px;border:1px solid #b8babc;border-radius:3px;background:#eff0f1"></div>
<svg class="r" style="left:254px;top:1015px;" width="24" height="24" viewBox="0 0 24 24"><g stroke="#6b6b6b" stroke-width="2.2" fill="none"><path d="M4.5 6.5 L18 18"/><path d="M4.5 18 L9 14 M13 10 L17 6.5"/></g><path d="M19.5 4.5 V10 L14 4.5 Z M19.5 19.5 V14 L14 19.5 Z" fill="#6b6b6b"/></svg>
<svg class="r" style="left:1818px;top:1026px;" width="20" height="16" viewBox="0 0 20 16"><path d="M1 5 H4 L9 1 V15 L4 11 H1 Z" fill="#6b6b6b"/><path d="M11.5 5 Q13.5 8 11.5 11 M14 3 Q17.5 8 14 13" stroke="#f39c12" stroke-width="1.6" fill="none"/></svg>
<svg class="r" style="left:1838px;top:1018px;" width="78" height="25" viewBox="0 0 78 25"><defs><linearGradient id="vg" x1="0" x2="1"><stop offset="0" stop-color="#a0e398"/><stop offset="0.55" stop-color="#49d040"/><stop offset="0.88" stop-color="#12c912"/><stop offset="0.98" stop-color="#e4c400"/></linearGradient></defs><path d="M3.5 22.5 L74 2.5 V22.5 Z" fill="#fff"/><path d="M4 22 L65 5 V22 Z" fill="url(#vg)"/><path d="M3.5 22.5 L74 2.5 V22.5 Z" fill="none" stroke="#6c6c6c" stroke-width="1.8" stroke-linejoin="round"/></svg>
<div class="t" style="left:1846.00px;top:1020.30px;font-size:8.5px;line-height:8.5px;color:#8b8b8b;font-family:'Liberation Sans',sans-serif;font-weight:400;transform:scaleX(1.0580);">105%</div>
</body></html>
